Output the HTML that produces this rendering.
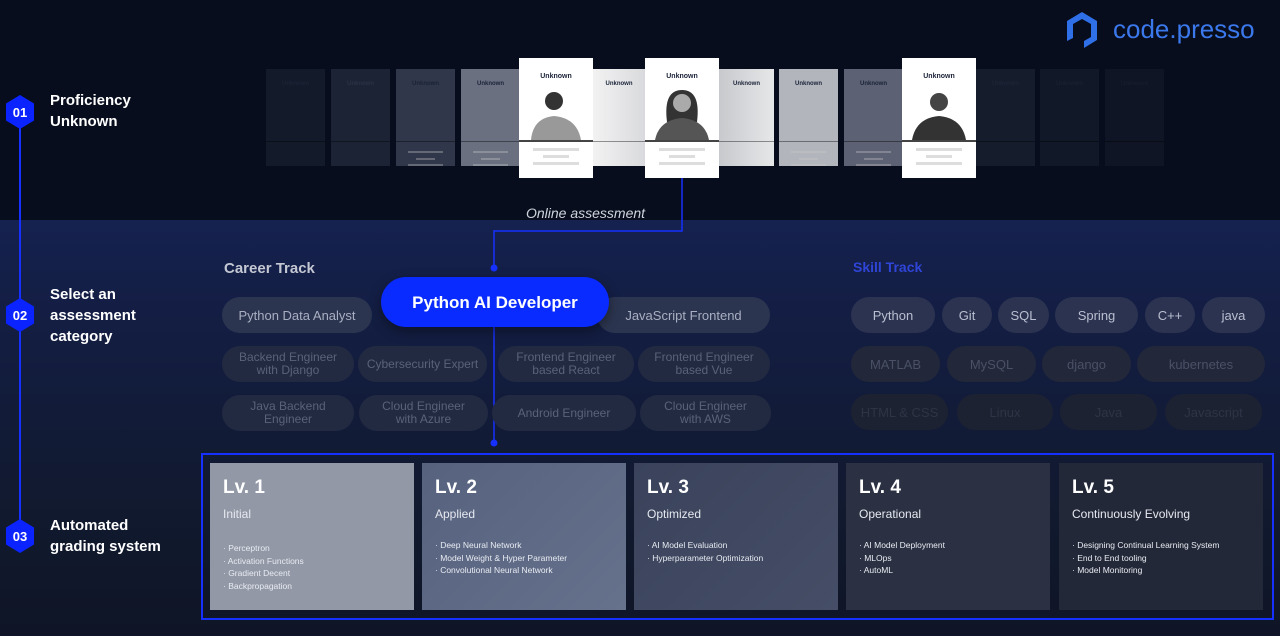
<!DOCTYPE html>
<html><head><meta charset="utf-8"><style>
*{margin:0;padding:0;box-sizing:border-box}
body{width:1280px;height:636px;overflow:hidden;background:#070d1c;font-family:"Liberation Sans",sans-serif;position:relative;color:#fff}
.a{position:absolute}
.bottom{left:0;top:220px;width:1280px;height:416px;background:linear-gradient(#15214f 0%,#131d40 30%,#111a30 65%,#0f1526 100%)}
.card{position:absolute;top:69px;width:59px;height:97px;font-size:6px;font-weight:bold;text-align:center;padding-top:12px;color:#1a2238}
.card i{position:absolute;left:0;right:0;top:72px;height:1px;background:rgba(0,0,0,.4)}
.card b{position:absolute;left:12px;right:12px;height:2px;background:rgba(200,200,200,.35)}
.hc{position:absolute;top:58px;width:74px;height:120px;background:#fff;font-size:7px;font-weight:bold;text-align:center;padding-top:15px;color:#1a2238}
.hc .ph{position:absolute;left:6px;right:6px;top:24px;height:58px;overflow:hidden}
.hc .ln{position:absolute;left:0;right:0;top:82px;height:2px;background:#444}
.hc b{position:absolute;left:14px;right:14px;height:3px;background:#ddd}
.pill{position:absolute;height:36px;border-radius:18px;display:flex;align-items:center;justify-content:center;text-align:center;font-size:13px;line-height:13px}
.c1{background:#2c3550;color:#a8afc2}
.c2{background:#222a42;color:#5a627a}
.s1{background:#2c3350;color:#b9bfd0}
.s2{background:#222839;color:#4a5066}
.s3{background:#1d2232;color:#2e3446}
.lv{position:absolute;top:463px;width:204px;height:147px;padding:14px 13px}
.lv h3{font-size:19px;font-weight:bold;color:#fff;margin-bottom:8px}
.lv p{font-size:12px;color:#e6e9f0;margin-bottom:18px}
.lv ul{list-style:none;font-size:8.5px;line-height:12.5px;color:#e8ebf2}
.step{position:absolute;left:50px;font-size:15px;font-weight:bold;line-height:21px;color:#fff}
.hex{position:absolute;left:6px;width:28px;height:34px;background:#0b24ff;clip-path:polygon(50% 0,100% 25%,100% 75%,50% 100%,0 75%,0 25%);font-size:13px;font-weight:bold;display:flex;align-items:center;justify-content:center}
</style></head><body>
<div class="a bottom"></div>
<div class="a" style="left:19px;top:112px;width:2px;height:424px;background:#1630ff"></div>
<div class="hex" style="top:95px">01</div>
<div class="hex" style="top:298px">02</div>
<div class="hex" style="top:519px">03</div>
<div class="step" style="top:90px">Proficiency<br>Unknown</div>
<div class="step" style="top:284px">Select an<br>assessment<br>category</div>
<div class="step" style="top:515px">Automated<br>grading system</div>

<svg class="a" style="left:1064px;top:11px" width="36" height="40" viewBox="0 0 36 40"><path d="M18 1 L33 10 L33 29 L20 37 L20 30 L27 26 L27 13 L18 8 L9 13 L9 27 L3 30 L3 10 Z" fill="#2f6fe8"/></svg>
<div class="a" style="left:1113px;top:14px;font-size:26px;color:#3a78ec">code.presso</div>

<!-- cards -->
<div class="card" style="left:266px;background:#131a2a;color:#1c2335"><i></i>Unknown</div>
<div class="card" style="left:331px;background:#1c2335;color:#2a3246">Unknown<i></i></div>
<div class="card" style="left:396px;background:#30374a;color:#1a2238">Unknown<i></i><b style="top:82px"></b><b style="top:89px;left:20px;right:20px"></b><b style="top:95px"></b></div>
<div class="card" style="left:461px;background:#6a7080">Unknown<i></i><b style="top:82px"></b><b style="top:89px;left:20px;right:20px"></b><b style="top:95px"></b></div>
<div class="card" style="left:593px;width:52px;background:linear-gradient(90deg,#f2f2f2,#d9dadd)">Unknown<i></i></div>
<div class="card" style="left:719px;width:55px;background:linear-gradient(90deg,#c8c9cc,#e6e7e9)">Unknown<i></i></div>
<div class="card" style="left:779px;background:#b2b5bc">Unknown<i></i><b style="top:82px"></b><b style="top:89px;left:20px;right:20px"></b><b style="top:95px"></b></div>
<div class="card" style="left:844px;background:#5c6273">Unknown<i></i><b style="top:82px"></b><b style="top:89px;left:20px;right:20px"></b><b style="top:95px"></b></div>
<div class="card" style="left:976px;background:#151c2c;color:#1e2536">Unknown<i></i></div>
<div class="card" style="left:1040px;background:#111827;color:#1a2132">Unknown<i></i></div>
<div class="card" style="left:1105px;background:#0f1524;color:#171d2d">Unknown<i></i></div>

<div class="hc" style="left:519px">Unknown<div class="ph"><svg width="62" height="58"><circle cx="29" cy="19" r="9" fill="#333"/><path d="M6 58 Q8 36 29 34 Q52 36 56 58Z" fill="#999"/></svg></div><div class="ln"></div><b style="top:90px"></b><b style="top:97px;left:24px;right:24px"></b><b style="top:104px"></b></div>
<div class="hc" style="left:645px">Unknown<div class="ph"><svg width="62" height="58"><path d="M16 40 Q12 8 31 8 Q50 8 46 40Z" fill="#333"/><circle cx="31" cy="21" r="9" fill="#aaa"/><path d="M4 58 Q8 38 31 36 Q54 38 58 58Z" fill="#555"/></svg></div><div class="ln"></div><b style="top:90px"></b><b style="top:97px;left:24px;right:24px"></b><b style="top:104px"></b></div>
<div class="hc" style="left:902px">Unknown<div class="ph"><svg width="62" height="58"><circle cx="31" cy="20" r="9" fill="#444"/><path d="M4 58 Q8 36 31 34 Q54 36 58 58Z" fill="#333"/></svg></div><div class="ln"></div><b style="top:90px"></b><b style="top:97px;left:24px;right:24px"></b><b style="top:104px"></b></div>

<!-- connectors -->
<svg class="a" style="left:0;top:0" width="1280" height="636"><path d="M682 178 V231 H494 V268 M494 327 V443" stroke="#1630ff" stroke-width="1.5" fill="none"/><circle cx="494" cy="268" r="3.5" fill="#1630ff"/><circle cx="494" cy="443" r="3.5" fill="#1630ff"/><rect x="202" y="454" width="1071" height="165" fill="none" stroke="#1630ff" stroke-width="2"/></svg>
<div class="a" style="left:526px;top:205px;font-size:14px;font-style:italic;color:#d0d4de">Online assessment</div>

<div class="a" style="left:224px;top:260px;font-size:15px;font-weight:bold;color:#c4c8d3">Career Track</div>
<div class="a" style="left:853px;top:259px;font-size:14px;font-weight:bold;color:#2f45d8">Skill Track</div>

<div class="pill c1" style="left:222px;top:297px;width:150px">Python Data Analyst</div>
<div class="pill c1" style="left:597px;top:297px;width:173px">JavaScript Frontend</div>
<div class="pill c2" style="left:222px;top:346px;width:132px;font-size:12px">Backend Engineer<br>with Django</div>
<div class="pill c2" style="left:358px;top:346px;width:129px;font-size:12px">Cybersecurity Expert</div>
<div class="pill c2" style="left:498px;top:346px;width:136px;font-size:12px">Frontend Engineer<br>based React</div>
<div class="pill c2" style="left:638px;top:346px;width:132px;font-size:12px">Frontend Engineer<br>based Vue</div>
<div class="pill c2" style="left:222px;top:395px;width:132px;font-size:12px">Java Backend<br>Engineer</div>
<div class="pill c2" style="left:359px;top:395px;width:129px;font-size:12px">Cloud Engineer<br>with Azure</div>
<div class="pill c2" style="left:492px;top:395px;width:144px;font-size:12px">Android Engineer</div>
<div class="pill c2" style="left:640px;top:395px;width:131px;font-size:12px">Cloud Engineer<br>with AWS</div>
<div class="pill" style="left:381px;top:277px;width:228px;height:50px;border-radius:25px;background:#0a2bff;font-size:17px;font-weight:bold;color:#fff;box-shadow:0 4px 12px rgba(0,0,0,.4)">Python AI Developer</div>

<div class="pill s1" style="left:851px;top:297px;width:84px">Python</div>
<div class="pill s1" style="left:942px;top:297px;width:50px">Git</div>
<div class="pill s1" style="left:998px;top:297px;width:51px">SQL</div>
<div class="pill s1" style="left:1055px;top:297px;width:83px">Spring</div>
<div class="pill s1" style="left:1145px;top:297px;width:50px">C++</div>
<div class="pill s1" style="left:1202px;top:297px;width:63px">java</div>
<div class="pill s2" style="left:851px;top:346px;width:89px">MATLAB</div>
<div class="pill s2" style="left:947px;top:346px;width:89px">MySQL</div>
<div class="pill s2" style="left:1042px;top:346px;width:89px">django</div>
<div class="pill s2" style="left:1137px;top:346px;width:128px">kubernetes</div>
<div class="pill s3" style="left:851px;top:394px;width:97px">HTML &amp; CSS</div>
<div class="pill s3" style="left:957px;top:394px;width:96px">Linux</div>
<div class="pill s3" style="left:1060px;top:394px;width:97px">Java</div>
<div class="pill s3" style="left:1165px;top:394px;width:97px">Javascript</div>

<div class="lv" style="left:210px;background:#9298a6"><h3>Lv. 1</h3><p style="margin-bottom:21px">Initial</p><ul><li>· Perceptron</li><li>· Activation Functions</li><li>· Gradient Decent</li><li>· Backpropagation</li></ul></div>
<div class="lv" style="left:422px;background:linear-gradient(135deg,#56627e,#66728c)"><h3>Lv. 2</h3><p>Applied</p><ul><li>· Deep Neural Network</li><li>· Model Weight &amp; Hyper Parameter</li><li>· Convolutional Neural Network</li></ul></div>
<div class="lv" style="left:634px;background:linear-gradient(135deg,#3a435b,#454e66)"><h3>Lv. 3</h3><p>Optimized</p><ul><li>· AI Model Evaluation</li><li>· Hyperparameter Optimization</li></ul></div>
<div class="lv" style="left:846px;background:#2b3142"><h3>Lv. 4</h3><p>Operational</p><ul><li>· AI Model Deployment</li><li>· MLOps</li><li>· AutoML</li></ul></div>
<div class="lv" style="left:1059px;background:#232838"><h3>Lv. 5</h3><p>Continuously Evolving</p><ul><li>· Designing Continual Learning System</li><li>· End to End tooling</li><li>· Model Monitoring</li></ul></div>
</body></html>
